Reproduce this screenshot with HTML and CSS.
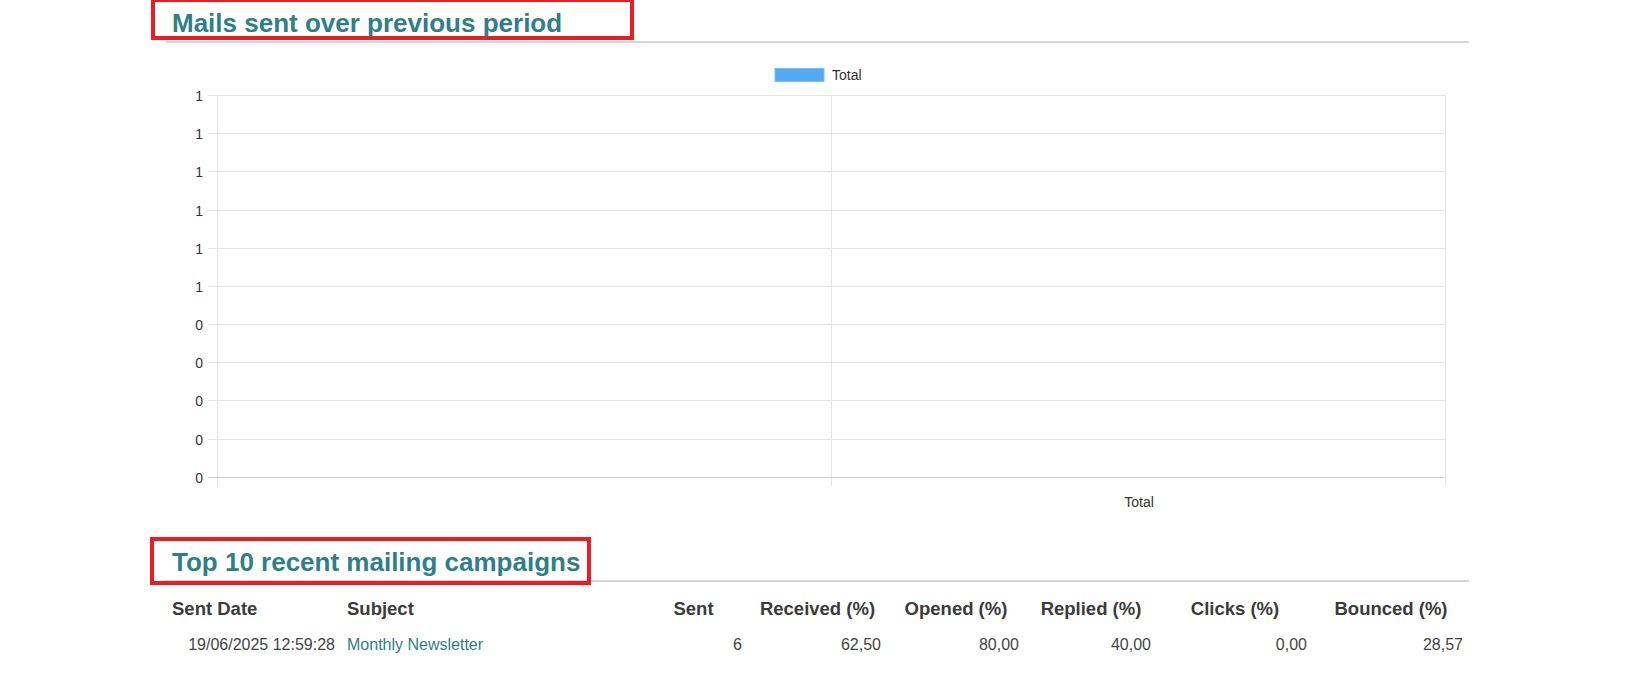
FILE: index.html
```html
<!DOCTYPE html>
<html lang="en">

<head>
    <meta charset="UTF-8">
    <meta name="viewport" content="width=device-width, initial-scale=1.0">
    <title>Mailing statistics</title>
    <link rel="stylesheet" href="styles.css">
</head>

<body>
    <div class="page">
        <h2 class="section-title"><span class="hl hl-first">Mails sent over previous period</span></h2>

        <!-- Chart (static copy of the canvas chart) -->
        <div class="chart">
            <svg width="1303" height="496" viewBox="0 0 1303 496">
                <g class="legend">
                    <rect x="609" y="25.5" width="49" height="13" />
                    <text x="666" y="36.5">Total</text>
                </g>
                <g class="grid">
                    <line x1="42" y1="52.5" x2="1279.5" y2="52.5" />
                    <line x1="42" y1="90.5" x2="1279.5" y2="90.5" />
                    <line x1="42" y1="128.5" x2="1279.5" y2="128.5" />
                    <line x1="42" y1="167.5" x2="1279.5" y2="167.5" />
                    <line x1="42" y1="205.5" x2="1279.5" y2="205.5" />
                    <line x1="42" y1="243.5" x2="1279.5" y2="243.5" />
                    <line x1="42" y1="281.5" x2="1279.5" y2="281.5" />
                    <line x1="42" y1="319.5" x2="1279.5" y2="319.5" />
                    <line x1="42" y1="357.5" x2="1279.5" y2="357.5" />
                    <line x1="42" y1="396.5" x2="1279.5" y2="396.5" />
                    <line x1="51.5" y1="52.5" x2="51.5" y2="443.5" />
                    <line x1="665.5" y1="52.5" x2="665.5" y2="443.5" />
                    <line x1="1279.5" y1="52.5" x2="1279.5" y2="443.5" />
                </g>
                <line class="axis" x1="42" y1="434.5" x2="1279.5" y2="434.5" />
                <g class="ticks">
                    <text x="37" y="57.5">1</text>
                    <text x="37" y="95.5">1</text>
                    <text x="37" y="133.5">1</text>
                    <text x="37" y="172.5">1</text>
                    <text x="37" y="210.5">1</text>
                    <text x="37" y="248.5">1</text>
                    <text x="37" y="286.5">0</text>
                    <text x="37" y="324.5">0</text>
                    <text x="37" y="362.5">0</text>
                    <text x="37" y="401.5">0</text>
                    <text x="37" y="439.5">0</text>
                </g>
                <text class="xlabel" x="973" y="463.5">Total</text>
            </svg>
        </div>

        <h2 class="section-title"><span class="hl hl-second">Top 10 recent mailing campaigns</span></h2>

        <table class="campaigns">
            <thead>
                <tr>
                    <th class="col-date">Sent Date</th>
                    <th class="col-subject">Subject</th>
                    <th class="col-sent num">Sent</th>
                    <th class="col-received num">Received (%)</th>
                    <th class="col-opened num">Opened (%)</th>
                    <th class="col-replied num">Replied (%)</th>
                    <th class="col-clicks num">Clicks (%)</th>
                    <th class="col-bounced num">Bounced (%)</th>
                </tr>
            </thead>
            <tbody>
                <tr>
                    <td class="right">19/06/2025 12:59:28</td>
                    <td><a href="#">Monthly Newsletter</a></td>
                    <td class="right">6</td>
                    <td class="right">62,50</td>
                    <td class="right">80,00</td>
                    <td class="right">40,00</td>
                    <td class="right">0,00</td>
                    <td class="right">28,57</td>
                </tr>
            </tbody>
        </table>
    </div>
</body>

</html>
```

FILE: styles.css
```css
body {
    margin: 0;
    padding: 0;
    background: #fff;
    font-family: 'Liberation Sans', Arial, sans-serif;
    color: #444;
}

.page {
    margin-left: 166px;
    width: 1303px;
}

/* Section titles */
.section-title {
    margin: 0;
    padding: 8px 0 3px 6px;
    font-size: 26px;
    line-height: 30px;
    font-weight: bold;
    color: #2e7f87;
    border-bottom: 2px solid #d6d6d6;
}

/* red highlight frame drawn over the title */
.hl {
    position: relative;
}

.hl::after {
    content: '';
    position: absolute;
    border: 4px solid #ed1c24;
}

.hl-first::after {
    left: -21px;
    right: -72px;
    top: -10px;
    bottom: -2px;
}

.hl-second::after {
    left: -22px;
    right: -11px;
    top: -10px;
    bottom: -8px;
}

/* Chart */
.chart svg {
    display: block;
}

.chart text {
    font-family: 'Liberation Sans', Arial, sans-serif;
    font-size: 14px;
    fill: #333;
}

.legend rect {
    fill: #52aaf5;
    stroke: #7cbff5;
    stroke-width: 1;
}

.grid line {
    stroke: #e5e5e5;
    stroke-width: 1;
}

.axis {
    stroke: #cdcdcd;
    stroke-width: 1;
}

.ticks text {
    text-anchor: end;
}

.chart .xlabel {
    text-anchor: middle;
}

/* Campaign table */
.campaigns {
    width: 1303px;
    margin-top: 10px;
    border-collapse: collapse;
    table-layout: fixed;
}

.campaigns th,
.campaigns td {
    box-sizing: border-box;
}

.campaigns th {
    padding: 6px 6px 8px;
    font-size: 18.5px;
    font-weight: bold;
    color: #3b3b3b;
    text-align: left;
    white-space: nowrap;
}

.campaigns th.num {
    text-align: center;
}

.campaigns td {
    padding: 8px 6px;
    font-size: 16px;
    color: #444;
    white-space: nowrap;
}

.campaigns td.right {
    text-align: right;
}

.campaigns a {
    color: #2e7f87;
    text-decoration: none;
}

.col-date { width: 175px; }
.col-subject { width: 298px; }
.col-sent { width: 109px; }
.col-received { width: 139px; }
.col-opened { width: 138px; }
.col-replied { width: 132px; }
.col-clicks { width: 156px; }
.col-bounced { width: 156px; }
```
